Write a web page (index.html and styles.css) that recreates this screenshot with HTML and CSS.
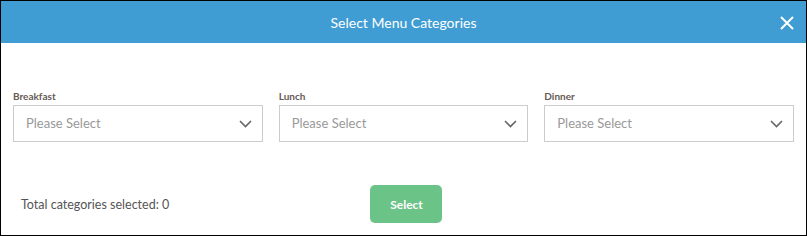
FILE: index.html
```html
<!DOCTYPE html>
<html>
<head>
  <title>Select Menu Categories</title>
  <meta charset="UTF-8">
  <link rel="stylesheet" href="styles.css">
</head>
<body>
  <div class="modal">
    <div class="modal-header">
      <h1>Select Menu Categories</h1>
      <button class="close-btn" aria-label="Close">
        <svg width="14" height="14" viewBox="0 0 14 14">
          <path d="M1 1 L13 13 M13 1 L1 13" stroke="#fff" stroke-width="2" fill="none"/>
        </svg>
      </button>
    </div>

    <div class="modal-body">
      <div class="field">
        <label>Breakfast</label>
        <div class="select-box">
          <span class="placeholder">Please Select</span>
          <svg class="chevron" width="13" height="8" viewBox="0 0 13 8">
            <path d="M1 1 L6.5 6.5 L12 1" stroke="#666" stroke-width="1.6" fill="none"/>
          </svg>
        </div>
      </div>
      <div class="field">
        <label>Lunch</label>
        <div class="select-box">
          <span class="placeholder">Please Select</span>
          <svg class="chevron" width="13" height="8" viewBox="0 0 13 8">
            <path d="M1 1 L6.5 6.5 L12 1" stroke="#666" stroke-width="1.6" fill="none"/>
          </svg>
        </div>
      </div>
      <div class="field">
        <label>Dinner</label>
        <div class="select-box">
          <span class="placeholder">Please Select</span>
          <svg class="chevron" width="13" height="8" viewBox="0 0 13 8">
            <path d="M1 1 L6.5 6.5 L12 1" stroke="#666" stroke-width="1.6" fill="none"/>
          </svg>
        </div>
      </div>
    </div>

    <div class="modal-footer">
      <div class="total">Total categories selected: 0</div>
      <div class="actions">
        <button class="select-btn">Select</button>
      </div>
    </div>
  </div>
</body>
</html>
```

FILE: styles.css
```css
:root {
  --primary-color: #3f9dd3;
  --success-color: #6cc387;
  --text-color: #555;
  --label-color: #665a55;
  --placeholder: #999;
  --border: #ccc;
}

* {
  box-sizing: border-box;
  margin: 0;
  padding: 0;
}

body {
  font-family: Lato, 'Open Sans', sans-serif;
  margin: 0;
  background-color: #fff;
  color: var(--text-color);
}

.modal {
  width: 807px;
  height: 236px;
  border: 1px solid #000;
  background-color: #fff;
}

.modal-header {
  height: 42px;
  background-color: var(--primary-color);
  display: flex;
  align-items: center;
  justify-content: center;
  position: relative;
}

h1 {
  color: #fff;
  font-size: 14px;
  font-weight: 400;
  margin-top: 1px;
}

.close-btn {
  position: absolute;
  right: 12px;
  top: 15px;
  background: none;
  border: none;
  cursor: pointer;
  display: flex;
}

.modal-body {
  display: grid;
  grid-template-columns: repeat(3, 1fr);
  gap: 16px;
  padding: 47px 12px 0 12px;
}

.field label {
  display: block;
  font-size: 10px;
  font-weight: 700;
  color: var(--label-color);
  margin-bottom: 4px;
  height: 11px;
}

.select-box {
  height: 37px;
  border: 1px solid var(--border);
  display: flex;
  align-items: center;
  justify-content: space-between;
  padding: 0 10px 0 12px;
}

.placeholder {
  font-size: 13px;
  color: var(--placeholder);
  margin-top: -1px;
}

.chevron {
  margin-top: 1px;
}

.modal-footer {
  display: grid;
  grid-template-columns: repeat(3, 1fr);
  gap: 16px;
  padding: 43px 12px 0 12px;
  align-items: center;
}

.total {
  font-size: 12.5px;
  color: var(--text-color);
  padding-left: 8px;
}

.actions {
  display: flex;
  justify-content: center;
  padding-left: 6px;
}

.select-btn {
  width: 72px;
  height: 38px;
  border: none;
  border-radius: 5px;
  background-color: var(--success-color);
  color: #fff;
  font-family: Lato, sans-serif;
  font-size: 12px;
  font-weight: 700;
  cursor: pointer;
}
```
